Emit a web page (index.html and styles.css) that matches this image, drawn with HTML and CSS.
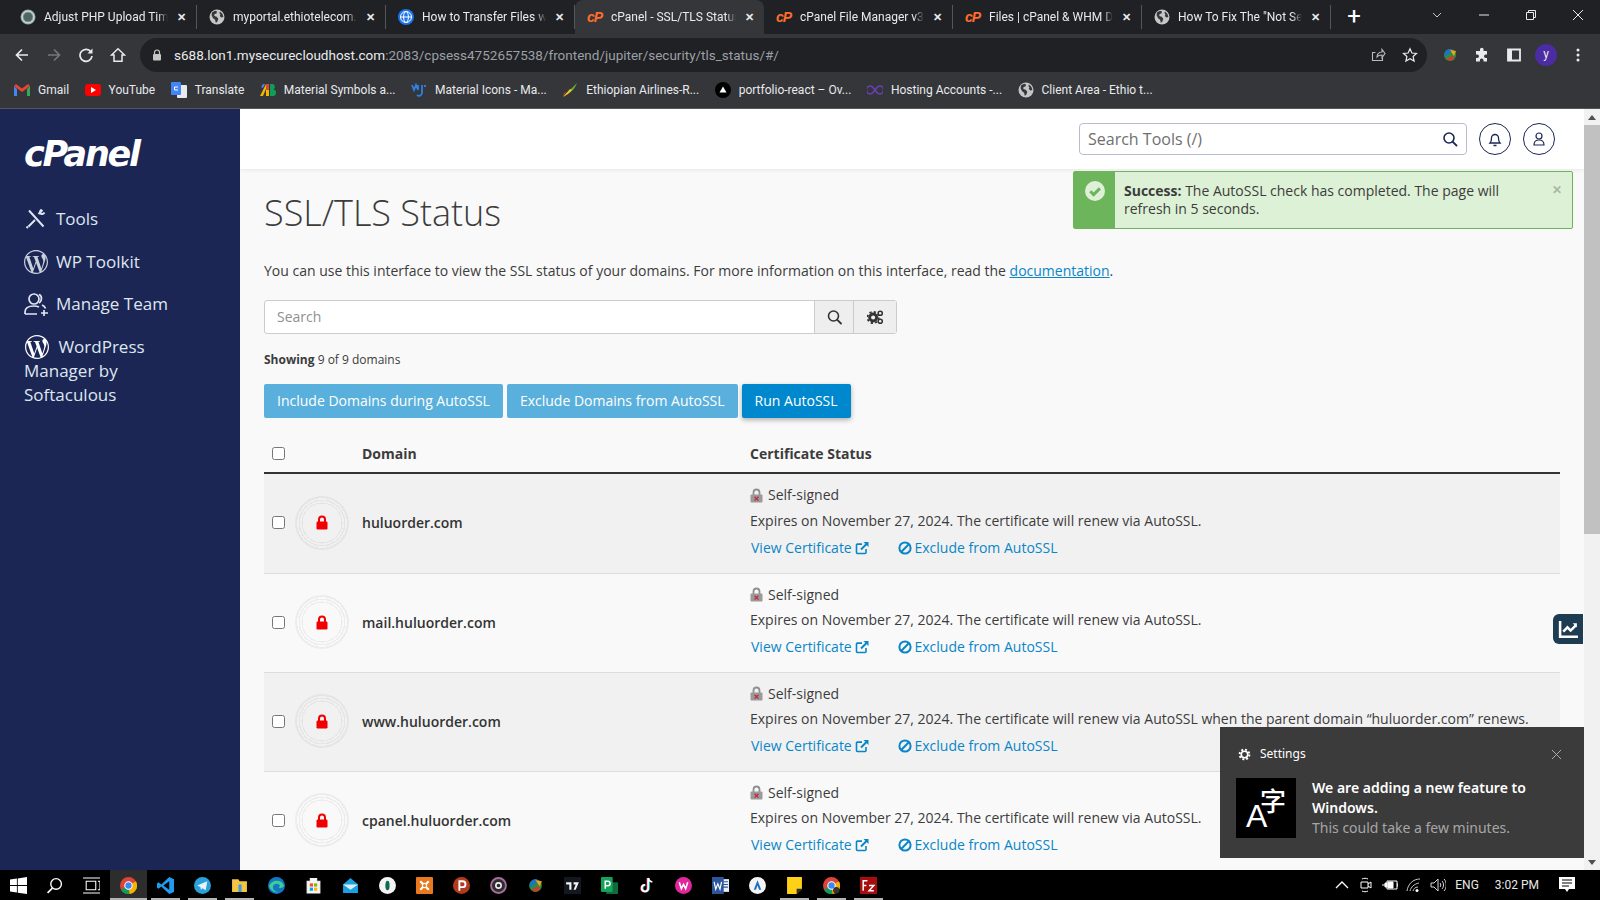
FILE: index.html
```html
<!DOCTYPE html>
<html lang="en">
<head>
  <meta charset="UTF-8">
  <title>cPanel - SSL/TLS Status</title>
  <link rel="stylesheet" href="styles.css">
</head>
<body>
  <!-- shared icons -->
  <svg class="sprite" xmlns="http://www.w3.org/2000/svg">
    <symbol id="i-globe" viewBox="0 0 16 16">
      <circle cx="8" cy="8" r="7.5" fill="#c4c7c5"/>
      <path d="M3 3.5l3-1.8 2 .8-.5 2-2 .5-.2 2 2.4.8 1.6 2-1 3-1.5 1-.7-3-2-1.5-1.5-3zM11 2.5l2.5 2.5.9 3-2 .5-1.6-1.5.6-1.5-1-1.5z" fill="#35363a"/>
    </symbol>
    <symbol id="i-wp" viewBox="0 0 24 24">
      <path fill="currentColor" d="M21.469 6.825c.84 1.537 1.318 3.3 1.318 5.175 0 3.979-2.156 7.456-5.363 9.325l3.295-9.527c.615-1.54.82-2.771.82-3.864 0-.405-.026-.78-.07-1.11m-7.981.105c.647-.03 1.232-.105 1.232-.105.582-.075.514-.93-.067-.899 0 0-1.755.135-2.88.135-1.064 0-2.85-.15-2.85-.15-.585-.03-.661.855-.075.885 0 0 .54.061 1.125.09l1.68 4.605-2.37 7.08L5.354 6.9c.649-.03 1.234-.1 1.234-.1.585-.075.516-.93-.065-.896 0 0-1.746.138-2.874.138-.2 0-.438-.008-.69-.015C4.911 3.15 8.235 1.215 12 1.215c2.809 0 5.365 1.072 7.286 2.833-.046-.003-.091-.009-.141-.009-1.06 0-1.812.923-1.812 1.914 0 .89.513 1.643 1.06 2.531.411.72.89 1.643.89 2.977 0 .915-.354 1.994-.821 3.479l-1.075 3.585-3.9-11.61.001.014zM12 22.784c-1.059 0-2.081-.153-3.048-.437l3.237-9.406 3.315 9.087c.024.053.05.101.078.149-1.12.393-2.325.609-3.582.609M1.211 12c0-1.564.336-3.05.935-4.39L7.29 21.709C3.694 19.96 1.212 16.271 1.211 12M12 0C5.385 0 0 5.385 0 12s5.385 12 12 12 12-5.385 12-12S18.615 0 12 0"/>
    </symbol>
    <symbol id="i-search" viewBox="0 0 16 16">
      <circle cx="7" cy="7" r="5" fill="none" stroke="currentColor" stroke-width="1.6"/>
      <path d="M10.8 10.8L14.5 14.5" stroke="currentColor" stroke-width="1.8" stroke-linecap="round"/>
    </symbol>
    <symbol id="i-redlock" viewBox="0 0 12 15">
      <path d="M3 7V4.5a3 3 0 0 1 6 0V7" fill="none" stroke="#f00000" stroke-width="2"/>
      <rect x="0.5" y="6.5" width="11" height="8" rx="1.2" fill="#f00000"/>
    </symbol>
    <symbol id="i-graylock" viewBox="0 0 13 15">
      <path d="M3.5 7V4.5a3 3 0 0 1 6 0V7" fill="none" stroke="#8f8f8f" stroke-width="1.8"/>
      <rect x="0.5" y="6.5" width="12" height="8" rx="1" fill="#9a9a9a"/>
      <path d="M4.5 8.8l4 3.8M8.5 8.8l-4 3.8" stroke="#c4283c" stroke-width="1.3"/>
    </symbol>
    <symbol id="i-ext" viewBox="0 0 14 14">
      <path d="M11 8v3.6a.9.9 0 0 1-.9.9H2.4a.9.9 0 0 1-.9-.9V4a.9.9 0 0 1 .9-.9H7" fill="none" stroke="currentColor" stroke-width="1.6"/>
      <path d="M6 8.5L12 2.5" stroke="currentColor" stroke-width="1.9"/>
      <path d="M8.5 1h5v5z" fill="currentColor"/>
    </symbol>
    <symbol id="i-ban" viewBox="0 0 14 14">
      <circle cx="7" cy="7" r="5.6" fill="none" stroke="currentColor" stroke-width="2"/>
      <path d="M3.2 11L11 3" stroke="currentColor" stroke-width="2"/>
    </symbol>
  </svg>

  <header class="chrome">
    <div class="tabstrip">
      <div class="tab">
        <svg class="fav" viewBox="0 0 16 16"><circle cx="8" cy="8" r="7.5" fill="#8fa5a0"/><circle cx="8" cy="8" r="4.5" fill="#4f6661"/><circle cx="8" cy="8" r="6" fill="none" stroke="#dfe5e3"/></svg>
        <span class="tab-title">Adjust PHP Upload Time</span><span class="tab-x">✕</span>
      </div>
      <div class="tab">
        <svg class="fav"><use href="#i-globe"/></svg>
        <span class="tab-title">myportal.ethiotelecom.et</span><span class="tab-x">✕</span>
      </div>
      <div class="tab">
        <svg class="fav" viewBox="0 0 16 16"><circle cx="8" cy="8" r="8" fill="#1a73e8"/><circle cx="8" cy="8" r="5.5" fill="none" stroke="#fff"/><ellipse cx="8" cy="8" rx="2.4" ry="5.5" fill="none" stroke="#fff"/><path d="M2.5 8h11" stroke="#fff"/></svg>
        <span class="tab-title">How to Transfer Files with</span><span class="tab-x">✕</span>
      </div>
      <div class="tab tab-active">
        <span class="fav cp-fav">cP</span>
        <span class="tab-title">cPanel - SSL/TLS Status</span><span class="tab-x">✕</span>
      </div>
      <div class="tab">
        <span class="fav cp-fav">cP</span>
        <span class="tab-title">cPanel File Manager v3</span><span class="tab-x">✕</span>
      </div>
      <div class="tab">
        <span class="fav cp-fav">cP</span>
        <span class="tab-title">Files | cPanel &amp; WHM Docs</span><span class="tab-x">✕</span>
      </div>
      <div class="tab">
        <svg class="fav"><use href="#i-globe"/></svg>
        <span class="tab-title">How To Fix The "Not Secure"</span><span class="tab-x">✕</span>
      </div>
      <span class="newtab">+</span>
      <div class="winctl">
        <svg viewBox="0 0 12 12"><path d="M2 4l4 4 4-4" fill="none" stroke="#c8c8c8"/></svg>
        <svg viewBox="0 0 12 12"><path d="M1 6h10" stroke="#e8e8e8"/></svg>
        <svg viewBox="0 0 12 12"><path d="M1.5 3.5h7v7h-7zM3.5 3.5v-2h7v7h-2" fill="none" stroke="#e8e8e8"/></svg>
        <svg viewBox="0 0 12 12"><path d="M1 1l10 10M11 1L1 11" stroke="#e8e8e8"/></svg>
      </div>
    </div>

    <div class="toolbar">
      <div class="nav-btns">
        <svg viewBox="0 0 16 16"><path d="M14 8H3M8 2.5L2.5 8 8 13.5" fill="none" stroke="#e8eaed" stroke-width="1.7"/></svg>
        <svg viewBox="0 0 16 16"><path d="M2 8h11M8 2.5L13.5 8 8 13.5" fill="none" stroke="#74777a" stroke-width="1.7"/></svg>
        <svg viewBox="0 0 16 16"><path d="M13 5A6 6 0 1 0 14 9" fill="none" stroke="#e8eaed" stroke-width="1.7"/><path d="M14.5 1.5v5h-5z" fill="#e8eaed"/></svg>
        <svg viewBox="0 0 16 16"><path d="M8 1.8L1.5 8H4v6.2h8V8h2.5z" fill="none" stroke="#e8eaed" stroke-width="1.5"/></svg>
      </div>
      <div class="omnibox">
        <svg class="omni-lock" viewBox="0 0 10 12"><path d="M2.5 5V3.5a2.5 2.5 0 0 1 5 0V5" fill="none" stroke="#c4c7c5" stroke-width="1.2"/><rect x="1" y="5" width="8" height="6.5" rx="1" fill="#c4c7c5"/></svg>
        <span class="url"><b>s688.lon1.mysecurecloudhost.com</b>:2083/cpsess4752657538/frontend/jupiter/security/tls_status/#/</span>
        <svg class="omni-act" viewBox="0 0 16 16"><path d="M12.5 9.5v4h-10v-8h3M7 10c0-3 2-5 5-5V2.5L15 6.5l-3 4V8c-2 0-4 .5-5 2z" fill="none" stroke="#b9bbbd" stroke-width="1.1"/></svg>
        <svg class="omni-act" viewBox="0 0 16 16"><path d="M8 1.8l1.900 4.200 4.600.5-3.400 3 1 4.600L8 11.700 3.900 14.100l1-4.600-3.400-3 4.600-.5z" fill="none" stroke="#e8eaed" stroke-width="1.2"/></svg>
      </div>
      <div class="ext-btns">
        <svg viewBox="0 0 16 16"><circle cx="8" cy="8" r="6" fill="#2c8f3f"/><path d="M3 10a6 6 0 0 1 6-8l1 3-4 2z" fill="#1e6fd0"/><path d="M8 3l6 1-2 5z" fill="#f0a21f"/><path d="M4 12l6-3 3 2-5 3z" fill="#d03a2f"/></svg>
        <svg viewBox="0 0 16 16"><path d="M6 2.500a1.800 1.800 0 0 1 3.600 0V4h3.400v3.400h-1.200a1.800 1.800 0 0 0 0 3.600H13v3.500H9.500v-1.200a1.800 1.800 0 0 0-3.600 0v1.200H2V11h1.200a1.800 1.800 0 0 0 0-3.600H2V4h4z" fill="#e8eaed"/></svg>
        <svg viewBox="0 0 16 16"><path d="M2 2.500h12v11H2z" fill="none" stroke="#e8eaed" stroke-width="1.800"/><path d="M2 2.500h4v11H2z" fill="#e8eaed"/></svg>
        <span class="avatar">y</span>
        <svg viewBox="0 0 16 16"><circle cx="8" cy="3" r="1.500" fill="#e8eaed"/><circle cx="8" cy="8" r="1.500" fill="#e8eaed"/><circle cx="8" cy="13" r="1.500" fill="#e8eaed"/></svg>
      </div>
    </div>

    <nav class="bookmarks">
      <a class="bm"><svg viewBox="0 0 16 12"><path d="M0 2v10h3V5z" fill="#4285f4"/><path d="M13 5v7h3V2z" fill="#34a853"/><path d="M0 2l8 6 8-6-2-2-6 4.500L2 0z" fill="#ea4335"/></svg>Gmail</a>
      <a class="bm"><svg viewBox="0 0 16 12"><rect width="16" height="12" rx="3" fill="#f00"/><path d="M6 3l5 3-5 3z" fill="#fff"/></svg>YouTube</a>
      <a class="bm"><svg viewBox="0 0 16 16"><rect x="6" y="3" width="10" height="13" rx="1" fill="#e8eaed"/><rect width="10" height="13" rx="1" fill="#4285f4"/><path d="M7 5H3.500v3H7" fill="none" stroke="#fff"/></svg>Translate</a>
      <a class="bm"><svg viewBox="0 0 16 16"><path d="M0 14L6 2h3v12H6V7l-3 7z" fill="#f4b400"/><path d="M6 2h3v6H6z" fill="#db4437"/><path d="M10 2h2.500a3 3 0 0 1 1 5.500A3.300 3.300 0 0 1 12.500 14H10z" fill="#0f9d58"/><path d="M1 5l2-3h2L3 6z" fill="#4285f4"/></svg>Material Symbols a...</a>
      <a class="bm"><svg viewBox="0 0 16 16"><path d="M1 3l2 5 2-5 2 5V3M11 3v8a3 3 0 0 1-5 2M14 3v2" fill="none" stroke="#2f7fe0" stroke-width="1.800"/></svg>Material Icons - Ma...</a>
      <a class="bm"><svg viewBox="0 0 16 16"><path d="M1 15L15 1c-2 5-5 9-10 11z" fill="#6fae3a"/><path d="M1 15l7-8 2 1-4 4z" fill="#f2c81e"/><path d="M1 15l3-5-2 1z" fill="#d83a2f"/></svg>Ethiopian Airlines-R...</a>
      <a class="bm"><svg viewBox="0 0 16 16"><circle cx="8" cy="8" r="8" fill="#000"/><path d="M8 4.500l3.500 6h-7z" fill="#fff"/></svg>portfolio-react – Ov...</a>
      <a class="bm"><svg viewBox="0 0 16 10"><path d="M8 5c-1.500-2-2.500-4-4.500-4a4 4 0 0 0 0 8C5.500 9 6.500 7 8 5c1.500-2 2.500-4 4.500-4a4 4 0 0 1 0 8C10.500 9 9.500 7 8 5z" fill="none" stroke="#6a3fb5" stroke-width="1.600"/></svg>Hosting Accounts -...</a>
      <a class="bm"><svg><use href="#i-globe"/></svg>Client Area - Ethio t...</a>
    </nav>
  </header>

  <div class="app">
    <aside class="sidebar">
      <div class="logo">cPanel</div>
      <ul class="side-nav">
        <li>
          <svg class="side-ico" viewBox="0 0 24 24"><path d="M5 3.500l14.500 16M18.500 3l-4 4M20.500 5.500c-1 1.500-3 2-4 1s-.5-3 1-4M11 13l-6.500 6.500M4 21l-1.500-1.500" fill="none" stroke="#dfe6f0" stroke-width="2"/></svg>
          <span>Tools</span>
        </li>
        <li>
          <svg class="side-ico"><use href="#i-wp"/></svg>
          <span>WP Toolkit</span>
        </li>
        <li>
          <svg class="side-ico" viewBox="0 0 24 24"><circle cx="10" cy="7" r="5" fill="none" stroke="#dfe6f0" stroke-width="1.700"/><path d="M1 22v-2c0-4 3.500-6 9-6 2 0 3.500.3 5 1M1 22h12M15 2.500c3 .8 3.500 6 0 8.500M18 13c2 .8 3 2 3.500 3.500M20 18v6M17 21h7" fill="none" stroke="#dfe6f0" stroke-width="1.700"/></svg>
          <span>Manage Team</span>
        </li>
        <li class="side-wrap">
          <svg class="side-ico side-ico-white"><use href="#i-wp"/></svg>
          WordPress Manager by Softaculous
        </li>
      </ul>
    </aside>

    <div class="main">
      <div class="topbar">
        <div class="tool-search">
          <span>Search Tools (/)</span>
          <svg class="tool-search-ico"><use href="#i-search"/></svg>
        </div>
        <span class="round-btn">
          <svg viewBox="0 0 16 16"><path d="M3 12c1-1 1.500-2 1.500-5a3.500 3.500 0 0 1 7 0c0 3 .5 4 1.500 5zM6.500 14.500h3" fill="none" stroke="#1b2655" stroke-width="1.300"/></svg>
        </span>
        <span class="round-btn">
          <svg viewBox="0 0 16 16"><circle cx="8" cy="5" r="3" fill="none" stroke="#1b2655" stroke-width="1.200"/><path d="M3 14c0-3 2-5 5-5s5 2 5 5z" fill="none" stroke="#1b2655" stroke-width="1.200"/></svg>
        </span>
      </div>

      <div class="content">
        <h1>SSL/TLS Status</h1>
        <p class="intro">You can use this interface to view the SSL status of your domains. For more information on this interface, read the <a href="#">documentation</a>.</p>

        <div class="search-group">
          <div class="search-input">Search</div>
          <span class="addon"><svg><use href="#i-search"/></svg></span>
          <span class="addon addon-wide">
            <svg viewBox="0 0 18 16"><circle cx="6.500" cy="8.500" r="3.700" fill="none" stroke="#333" stroke-width="3"/><circle cx="6.500" cy="8.500" r="6" fill="none" stroke="#333" stroke-width="1.800" stroke-dasharray="2.400 2.300"/><circle cx="14" cy="4" r="2.200" fill="none" stroke="#333" stroke-width="1.600"/><circle cx="14" cy="12.500" r="2.200" fill="none" stroke="#333" stroke-width="1.600"/></svg>
          </span>
        </div>

        <p class="showing"><strong>Showing</strong> 9 of 9 domains</p>

        <div class="actions">
          <button class="btn btn-light">Include Domains during AutoSSL</button>
          <button class="btn btn-light">Exclude Domains from AutoSSL</button>
          <button class="btn btn-primary">Run AutoSSL</button>
        </div>

        <div class="table-head row-grid">
          <div class="cell-check"><input type="checkbox"></div>
          <div>Domain</div>
          <div>Certificate Status</div>
        </div>

        <div class="dom-list">
          <div class="dom-row row-grid">
            <div class="cell-check"><input type="checkbox"><span class="ring"><svg><use href="#i-redlock"/></svg></span></div>
            <div class="dom-name">huluorder.com</div>
            <div class="status">
              <div class="status-line status-first"><svg class="gray-lock"><use href="#i-graylock"/></svg>Self-signed</div>
              <div class="status-line">Expires on November 27, 2024. The certificate will renew via AutoSSL.</div>
              <div class="status-links">
                <a href="#">View Certificate <svg><use href="#i-ext"/></svg></a>
                <a href="#"><svg class="ban"><use href="#i-ban"/></svg> Exclude from AutoSSL</a>
              </div>
            </div>
          </div>

          <div class="dom-row row-grid">
            <div class="cell-check"><input type="checkbox"><span class="ring"><svg><use href="#i-redlock"/></svg></span></div>
            <div class="dom-name">mail.huluorder.com</div>
            <div class="status">
              <div class="status-line status-first"><svg class="gray-lock"><use href="#i-graylock"/></svg>Self-signed</div>
              <div class="status-line">Expires on November 27, 2024. The certificate will renew via AutoSSL.</div>
              <div class="status-links">
                <a href="#">View Certificate <svg><use href="#i-ext"/></svg></a>
                <a href="#"><svg class="ban"><use href="#i-ban"/></svg> Exclude from AutoSSL</a>
              </div>
            </div>
          </div>

          <div class="dom-row row-grid">
            <div class="cell-check"><input type="checkbox"><span class="ring"><svg><use href="#i-redlock"/></svg></span></div>
            <div class="dom-name">www.huluorder.com</div>
            <div class="status">
              <div class="status-line status-first"><svg class="gray-lock"><use href="#i-graylock"/></svg>Self-signed</div>
              <div class="status-line">Expires on November 27, 2024. The certificate will renew via AutoSSL when the parent domain “huluorder.com” renews.</div>
              <div class="status-links">
                <a href="#">View Certificate <svg><use href="#i-ext"/></svg></a>
                <a href="#"><svg class="ban"><use href="#i-ban"/></svg> Exclude from AutoSSL</a>
              </div>
            </div>
          </div>

          <div class="dom-row row-grid">
            <div class="cell-check"><input type="checkbox"><span class="ring"><svg><use href="#i-redlock"/></svg></span></div>
            <div class="dom-name">cpanel.huluorder.com</div>
            <div class="status">
              <div class="status-line status-first"><svg class="gray-lock"><use href="#i-graylock"/></svg>Self-signed</div>
              <div class="status-line">Expires on November 27, 2024. The certificate will renew via AutoSSL.</div>
              <div class="status-links">
                <a href="#">View Certificate <svg><use href="#i-ext"/></svg></a>
                <a href="#"><svg class="ban"><use href="#i-ban"/></svg> Exclude from AutoSSL</a>
              </div>
            </div>
          </div>
        </div>
      </div>

      <div class="alert">
        <div class="alert-side">
          <svg viewBox="0 0 16 16"><circle cx="8" cy="8" r="8" fill="#dff0d8"/><path d="M4.200 8.200l2.700 2.700 5-5" fill="none" stroke="#6cb55a" stroke-width="2.400"/></svg>
        </div>
        <div class="alert-text"><strong>Success:</strong> The AutoSSL check has completed. The page will refresh in 5 seconds.</div>
        <span class="alert-x">✕</span>
      </div>

      <span class="chart-btn">
        <svg viewBox="0 0 20 20"><path d="M2 2v15h17" fill="none" stroke="#fff" stroke-width="2.400"/><path d="M5 12l4-4 3 3 5-5" fill="none" stroke="#fff" stroke-width="2.400"/><path d="M14 4h4v4z" fill="#fff"/></svg>
      </span>
    </div>

    <div class="scrollbar">
      <span class="arrow-up"></span>
      <div class="thumb"></div>
      <span class="arrow-down"></span>
    </div>
  </div>

  <footer class="taskbar">
    <span class="task task-start"><svg viewBox="0 0 16 16"><path d="M0 2.300L6.500 1.400v6.200H0zM7.300 1.300L16 0v7.600H7.300zM0 8.400h6.500v6.200L0 13.700zM7.300 8.400H16V16l-8.700-1.200z" fill="#fff"/></svg></span>
    <span class="task"><svg viewBox="0 0 16 16"><circle cx="9.500" cy="6.500" r="5" fill="none" stroke="#fff" stroke-width="1.300"/><path d="M6 10.500L1.500 15" stroke="#fff" stroke-width="1.500"/></svg></span>
    <span class="task"><svg viewBox="0 0 16 16"><path d="M0 1h16M0 15h16M3 4h9v8H3z" fill="none" stroke="#fff"/><path d="M14 4h2v8h-2" fill="none" stroke="#fff"/></svg></span>
    <span class="task task-on"><svg viewBox="0 0 16 16"><circle cx="8" cy="8" r="8" fill="#db4437"/><path d="M8 8L1 12a8 8 0 0 0 8 4z" fill="#0f9d58"/><path d="M8 8l7-4a8 8 0 0 1-6 12z" fill="#f4b400"/><circle cx="8" cy="8" r="3.500" fill="#4285f4" stroke="#fff"/></svg></span>
    <span class="task run"><svg viewBox="0 0 16 16"><path d="M11.500 0L16 2v12l-4.500 2L4 9l-2.500 2L0 10V6l1.500-1L4 7z" fill="#1f9cf0"/><path d="M11.500 4v8L6 8z" fill="#000"/></svg></span>
    <span class="task run"><svg viewBox="0 0 16 16"><circle cx="8" cy="8" r="8" fill="#2aa1da"/><path d="M3 8l9.500-4-1.500 8.500-3-2-1.500 1.500-.5-2.500z" fill="#e8f4fb"/></svg></span>
    <span class="task run"><svg viewBox="0 0 16 16"><path d="M1 2h6l1 2h7v10H1z" fill="#f4c542"/><path d="M7 7h3v7H7z" fill="#3f9be0"/></svg></span>
    <span class="task"><svg viewBox="0 0 16 16"><circle cx="8" cy="8" r="8" fill="#1276c9"/><path d="M1 9c2-7 12-7 14-1 0 2-3 3-5 2 3-2-1-5-4-3-3 2-1 8 5 7a8 8 0 0 1-10-5z" fill="#3ecf8e"/></svg></span>
    <span class="task"><svg viewBox="0 0 16 16"><path d="M2 4h12v11H2zM5 4V1.500h6V4" fill="#f4f4f4" stroke="#f4f4f4"/><rect x="4.500" y="6" width="3" height="3" fill="#f25022"/><rect x="8.500" y="6" width="3" height="3" fill="#7fba00"/><rect x="4.500" y="10" width="3" height="3" fill="#00a4ef"/><rect x="8.500" y="10" width="3" height="3" fill="#ffb900"/></svg></span>
    <span class="task"><svg viewBox="0 0 16 16"><path d="M1 7l7-6 7 6v8H1z" fill="#1ba1e2"/><path d="M1 7l7 5 7-5" fill="#d8f1fc"/></svg></span>
    <span class="task"><svg viewBox="0 0 16 16"><circle cx="8" cy="8" r="8" fill="#f4f4f4"/><ellipse cx="8" cy="8" rx="2" ry="4.500" fill="#0b6b50"/></svg></span>
    <span class="task"><svg viewBox="0 0 16 16"><rect width="16" height="16" rx="1" fill="#e8791f"/><path d="M4 4l8 8M12 4l-8 8" stroke="#fff" stroke-width="2"/><circle cx="8" cy="8" r="2" fill="#e8791f" stroke="#fff"/></svg></span>
    <span class="task"><svg viewBox="0 0 16 16"><circle cx="8" cy="8" r="8" fill="#b23a1e"/><path d="M6 13V4h3a2.500 2.500 0 0 1 0 5.500H6" fill="none" stroke="#fff" stroke-width="1.800"/></svg></span>
    <span class="task"><svg viewBox="0 0 16 16"><circle cx="8" cy="8" r="7" fill="#2d2d2d" stroke="#a66ca0" stroke-width="1.800"/><circle cx="8" cy="8" r="2.500" fill="none" stroke="#f0f0f0" stroke-width="1.500"/></svg></span>
    <span class="task"><svg viewBox="0 0 16 16"><circle cx="8" cy="8" r="6" fill="#2c8f3f"/><path d="M3 10a6 6 0 0 1 6-8l1 3-4 2z" fill="#1e6fd0"/><path d="M8 3l6 1-2 5z" fill="#f0a21f"/><path d="M4 12l6-3 3 2-5 3z" fill="#d03a2f"/></svg></span>
    <span class="task"><svg viewBox="0 0 16 16"><rect width="16" height="16" fill="#131722"/><path d="M2 5h5v7H5V7H2zM9 5h5l-3 7H9l2-5H9z" fill="#f4f4f4"/></svg></span>
    <span class="task"><svg viewBox="0 0 16 16"><rect x="5" y="5" width="11" height="11" fill="#0e6b3b"/><rect width="11" height="14" rx="1" fill="#15a35a"/><path d="M4 11V4h2.500a2 2 0 0 1 0 4.200H4" fill="none" stroke="#fff" stroke-width="1.400"/></svg></span>
    <span class="task"><svg viewBox="0 0 16 16"><path d="M10 1v9.500a3 3 0 1 1-3-3" fill="none" stroke="#25f4ee" stroke-width="2"/><path d="M9 1v9.500a3 3 0 1 1-3-3" fill="none" stroke="#fe2c55" stroke-width="2"/><path d="M9.500 1v9.500a3 3 0 1 1-3-3M9.500 1c.5 2 2 3.500 4 3.500" fill="none" stroke="#fff" stroke-width="1.600"/></svg></span>
    <span class="task"><svg viewBox="0 0 16 16"><circle cx="8" cy="8" r="8" fill="#e0289c"/><path d="M4 5l2 6 2-4 2 4 2-6" fill="none" stroke="#fff" stroke-width="1.500"/></svg></span>
    <span class="task"><svg viewBox="0 0 16 16"><rect x="5" y="2" width="11" height="12" fill="#e8eef8"/><path d="M10 4.500h5M10 7h5M10 9.500h5" stroke="#2b579a"/><rect width="11" height="16" fill="#2b579a"/><path d="M2 4.500l1.500 7 2-5 2 5 1.500-7" fill="none" stroke="#fff" stroke-width="1.100"/></svg></span>
    <span class="task"><svg viewBox="0 0 16 16"><circle cx="8" cy="8" r="8" fill="#f4f4f4"/><path d="M8 3l3.500 9h-2L8 8l-1.500 4h-2z" fill="#1a6fc9"/></svg></span>
    <span class="task run"><svg viewBox="0 0 16 16"><path d="M1 0h14v11l-5 5H1z" fill="#fcd116"/><path d="M15 11h-5v5z" fill="#2c2c2c"/></svg></span>
    <span class="task run"><svg viewBox="0 0 16 16"><circle cx="8" cy="8" r="8" fill="#db4437"/><path d="M8 8L1 12a8 8 0 0 0 8 4z" fill="#0f9d58"/><path d="M8 8l7-4a8 8 0 0 1-6 12z" fill="#f4b400"/><circle cx="8" cy="8" r="3.500" fill="#4285f4" stroke="#fff"/><circle cx="12.500" cy="12.500" r="3" fill="#333"/></svg></span>
    <span class="task run"><svg viewBox="0 0 16 16"><rect width="16" height="16" fill="#a80c0c"/><path d="M3 13V3.500h4M3 8h3M8.500 8H13l-4.500 5H13" fill="none" stroke="#fff" stroke-width="1.400"/></svg></span>

    <div class="tray">
      <svg class="tray-ico" viewBox="0 0 16 16"><path d="M2 11l6-6 6 6" fill="none" stroke="#fff" stroke-width="1.300"/></svg>
      <svg class="tray-ico" viewBox="0 0 16 16"><path d="M4 2c2-1 4-1 6 0M4 14c2 1 4 1 6 0M3 5h7v6H3zM10 7l3-2v6l-3-2" fill="none" stroke="#fff"/></svg>
      <svg class="tray-ico" viewBox="0 0 16 16"><path d="M5 4h10v8H5zM15 7h1v2h-1" fill="none" stroke="#fff"/><path d="M6 5h5v6H6zM0 8h3M3 6v4M3 6h2v4H3" fill="#fff" stroke="#fff"/></svg>
      <svg class="tray-ico" viewBox="0 0 16 16"><path d="M1 14C2 7 7 2 14 2M4 14c1-4 4-7 9-8M7 14c.5-2 2-4 5-4" fill="none" stroke="#c8c8c8"/><circle cx="11" cy="13.500" r="1.500" fill="#fff"/></svg>
      <svg class="tray-ico" viewBox="0 0 16 16"><path d="M1 6h3l4-4v12l-4-4H1zM10 6c1 1 1 3 0 4M12 4c2 2 2 6 0 8M14 2c3 3 3 9 0 12" fill="none" stroke="#d8d8d8"/></svg>
      <span class="tray-lang">ENG</span>
      <span class="tray-time">3:02 PM</span>
      <svg class="tray-note" viewBox="0 0 16 16"><path d="M0 0h16v12H10l-2 3-2-3H0z" fill="#fff"/><path d="M3 3h10M3 6h10M3 9h7" stroke="#000"/></svg>
    </div>
  </footer>

  <div class="toast">
    <div class="toast-head">
      <svg viewBox="0 0 16 16"><circle cx="8" cy="8" r="4" fill="none" stroke="#fff" stroke-width="2"/><circle cx="8" cy="8" r="6" fill="none" stroke="#fff" stroke-width="2.400" stroke-dasharray="2.400 2.300"/></svg>
      <span>Settings</span>
      <svg class="toast-x" viewBox="0 0 12 12"><path d="M1 1l10 10M11 1L1 11" stroke="#b5b5b5"/></svg>
    </div>
    <div class="toast-body">
      <div class="toast-pic"><span class="pic-a">A</span><span class="pic-zi">字</span></div>
      <div class="toast-text">
        <strong>We are adding a new feature to Windows.</strong>
        <span>This could take a few minutes.</span>
      </div>
    </div>
  </div>
</body>
</html>
```

FILE: styles.css
```css
* {
  box-sizing: border-box;
}

html, body {
  margin: 0;
  height: 900px;
  overflow: hidden;
}

body {
  display: flex;
  flex-direction: column;
  font-family: "Open Sans", sans-serif;
  font-size: 14px;
  color: #3c3c3c;
  background: #f9f9f9;
}

.sprite {
  display: none;
}

a {
  color: #0a86c7;
  text-decoration: none;
}

/* browser chrome */
.chrome {
  height: 109px;
  flex: none;
  background: #35363a;
  font-family: Roboto, sans-serif;
  color: #e8eaed;
  border-bottom: 1px solid #55565a;
}

.tabstrip {
  height: 34px;
  background: #202124;
  display: flex;
  align-items: stretch;
  padding-left: 8px;
}

.tab {
  width: 189px;
  display: flex;
  align-items: center;
  padding: 0 7px 0 12px;
  font-size: 12px;
  position: relative;
  border-right: 1px solid #55565a;
  margin: 5px 0 5px;
}

.tab-active {
  background: #35363a;
  border-radius: 8px 8px 0 0;
  margin: 0;
  border-right: 0;
}

.fav {
  width: 16px;
  height: 16px;
  flex: none;
  margin-right: 8px;
}

.cp-fav {
  font: italic 700 14px/16px "Liberation Sans", sans-serif;
  color: #ff6c2c;
  letter-spacing: -1px;
}

.tab-title {
  flex: 1;
  white-space: nowrap;
  overflow: hidden;
  -webkit-mask-image: linear-gradient(90deg, #000 calc(100% - 10px), transparent);
  mask-image: linear-gradient(90deg, #000 calc(100% - 10px), transparent);
}

.tab-x {
  width: 16px;
  text-align: center;
  font-size: 11px;
  font-weight: 700;
  margin-left: 5px;
}

.newtab {
  width: 46px;
  text-align: center;
  font-size: 24px;
  line-height: 32px;
  color: #fff;
}

.winctl {
  margin-left: auto;
  display: flex;
  align-items: center;
  gap: 35px;
  padding: 0 16px 4px 0;
}

.winctl svg {
  width: 12px;
  height: 12px;
}

.toolbar {
  height: 41px;
  display: flex;
  align-items: center;
}

.nav-btns {
  display: flex;
  gap: 16px;
  padding-left: 14px;
  width: 140px;
}

.nav-btns svg {
  width: 16px;
  height: 16px;
}

.omnibox {
  width: 1287px;
  height: 34px;
  border-radius: 17px;
  background: #202124;
  display: flex;
  align-items: center;
  padding: 0 9px 0 12px;
}

.omni-lock {
  width: 10px;
  height: 12px;
  margin-right: 12px;
}

.url {
  flex: 1;
  font-size: 13.5px;
  color: #9aa0a6;
  white-space: nowrap;
}

.url b {
  font-weight: 400;
  color: #e8eaed;
}

.omni-act {
  width: 16px;
  height: 16px;
  margin-left: 16px;
}

.ext-btns {
  display: flex;
  align-items: center;
  gap: 16px;
  padding-left: 15px;
}

.ext-btns svg {
  width: 16px;
  height: 16px;
}

.avatar {
  width: 22px;
  height: 22px;
  margin: 0 -3px;
  border-radius: 50%;
  background: #4b2ca3;
  color: #e8eaed;
  font-size: 12px;
  line-height: 20px;
  text-align: center;
}

.bookmarks {
  height: 33px;
  display: flex;
  align-items: center;
  padding: 0 0 3px 14px;
  gap: 15.500px;
  font-size: 12px;
}

.bm {
  display: flex;
  align-items: center;
  gap: 8px;
  color: #e8eaed;
  white-space: nowrap;
}

.bm svg {
  width: 16px;
  height: 16px;
  flex: none;
}

/* cPanel layout */
.app {
  flex: 1;
  min-height: 0;
  display: flex;
}

.sidebar {
  width: 240px;
  flex: none;
  background: #1b2655;
  color: #dfe6f0;
  padding: 0 24px;
}

.logo {
  font: italic 700 35px/40px "DejaVu Sans", sans-serif;
  letter-spacing: -2.300px;
  color: #fff;
  padding-top: 25px;
  height: 98px;
}

.side-nav {
  list-style: none;
  margin: 0;
  padding: 0;
  font-size: 17px;
  line-height: 24px;
}

.side-nav li {
  display: flex;
  align-items: center;
  gap: 8px;
  margin-bottom: 18.700px;
}

.side-nav .side-wrap {
  display: block;
  width: 150px;
}

.side-ico {
  width: 24px;
  height: 24px;
  flex: none;
  color: #c8cfdc;
}

.side-wrap .side-ico {
  margin: 0 5px 0 1px;
  vertical-align: -6px;
}

.side-ico-white {
  color: #fff;
}

.main {
  flex: 1;
  min-width: 0;
  position: relative;
  overflow: hidden;
}

.topbar {
  height: 60px;
  background: #fff;
  box-shadow: 0 1px 4px rgba(0, 0, 0, .08);
  display: flex;
  align-items: center;
  justify-content: flex-end;
  padding-right: 29px;
  gap: 12px;
}

.tool-search {
  width: 388px;
  height: 32px;
  border: 1px solid #b9bcd0;
  border-radius: 4px;
  display: flex;
  align-items: center;
  justify-content: space-between;
  padding: 0 8px;
  font-size: 16px;
  color: #6f6f6f;
}

.tool-search-ico {
  width: 16px;
  height: 16px;
  color: #1b2655;
}

.round-btn {
  width: 32px;
  height: 32px;
  border: 1px solid #1b2655;
  border-radius: 50%;
  display: flex;
  align-items: center;
  justify-content: center;
}

.round-btn svg {
  width: 16px;
  height: 16px;
}

.content {
  padding: 0 24px;
}

h1 {
  margin: 0;
  padding-top: 19px;
  font-size: 36px;
  font-weight: 300;
  line-height: 50px;
  color: #3c3c3c;
}

.intro {
  margin: 23px 0 0;
  line-height: 20px;
}

.intro a {
  text-decoration: underline;
}

.search-group {
  margin-top: 19px;
  width: 633px;
  height: 34px;
  display: flex;
  border: 1px solid #ccc;
  border-radius: 3px;
  background: #fff;
}

.search-input {
  flex: 1;
  padding-left: 12px;
  line-height: 32px;
  color: #8f8f8f;
}

.addon {
  width: 39px;
  background: #eee;
  border-left: 1px solid #ccc;
  display: flex;
  align-items: center;
  justify-content: center;
  color: #333;
}

.addon-wide {
  width: 43px;
}

.addon svg {
  width: 17px;
  height: 16px;
}

.showing {
  margin: 17px 0 0;
  font-size: 12px;
  line-height: 18px;
}

.actions {
  margin-top: 15px;
  display: flex;
  gap: 4px;
}

.btn {
  height: 34px;
  padding: 0 12px 1px;
  border: 1px solid transparent;
  border-radius: 2px;
  font-family: inherit;
  font-size: 14px;
  color: #fff;
}

.btn-light {
  background: #5ab0dc;
}

.btn-primary {
  background: #0088cf;
  box-shadow: 0 2px 5px rgba(0, 0, 0, .3);
}

.row-grid {
  display: grid;
  grid-template-columns: 98px 388px 1fr;
  width: 1296px;
}

.table-head {
  margin-top: 16px;
  height: 40px;
  align-items: center;
  font-weight: 700;
  border-bottom: 2px solid #333;
}

.cell-check {
  display: flex;
  align-items: center;
  padding-left: 8px;
}

.cell-check input {
  width: 13px;
  height: 13px;
  margin: 0;
  flex: none;
}

.dom-row {
  height: 99px;
  padding-bottom: 2px;
  align-items: center;
  border-bottom: 1px solid #ddd;
}

.dom-row:first-child {
  height: 100px;
}

.dom-row:nth-child(odd) {
  background: #f1f1f1;
}

.ring {
  width: 54px;
  height: 54px;
  margin-left: 10px;
  border-radius: 50%;
  flex: none;
  display: flex;
  align-items: center;
  justify-content: center;
  background: radial-gradient(circle closest-side, transparent 72%, rgba(0, 0, 0, .05) 72% 76%, transparent 76% 82%, rgba(0, 0, 0, .05) 82% 87%, transparent 87% 92%, rgba(0, 0, 0, .05) 92% 100%);
}

.ring svg {
  width: 12px;
  height: 15px;
}

.dom-name {
  font-size: 14px;
  font-weight: 600;
  color: #333;
}

.status {
  line-height: 24px;
  padding-bottom: 2px;
}

.status-line {
  display: flex;
  align-items: center;
}

.status-first {
  height: 25px;
  padding-bottom: 2px;
}

.gray-lock {
  width: 13px;
  height: 15px;
  margin-right: 5px;
  flex: none;
}

.status-links {
  display: flex;
  gap: 29px;
  padding-top: 3px;
  padding-left: 1px;
}

.status-links svg {
  width: 14px;
  height: 14px;
  vertical-align: -2px;
}

.status-links .ban {
  margin-right: -1.500px;
}

/* overlays */
.alert {
  position: absolute;
  top: 62px;
  right: 11px;
  width: 500px;
  height: 58px;
  display: flex;
  background: #dcf1d5;
  border: 1px solid #6cb55a;
  border-radius: 2px;
}

.alert-side {
  width: 41px;
  background: #6cb55a;
  display: flex;
  justify-content: center;
  padding-top: 9px;
}

.alert-side svg {
  width: 20px;
  height: 20px;
}

.alert-text {
  flex: 1;
  padding: 10px 40px 0 9px;
  line-height: 18px;
}

.alert-x {
  position: absolute;
  right: 10px;
  top: 9px;
  color: #a9b8a4;
  font-size: 12px;
  font-weight: 700;
}

.chart-btn {
  position: absolute;
  top: 505px;
  right: 1px;
  width: 30px;
  height: 30px;
  background: #1f3d52;
  border-radius: 6px 0 0 6px;
  display: flex;
  align-items: center;
  justify-content: center;
}

.chart-btn svg {
  width: 21px;
  height: 21px;
}

.scrollbar {
  width: 16px;
  flex: none;
  background: #f1f1f1;
  display: flex;
  flex-direction: column;
  align-items: center;
}

.arrow-up {
  margin: 6px 0 5px;
  border: 4px solid transparent;
  border-top: 0;
  border-bottom: 5px solid #505050;
}

.thumb {
  width: 100%;
  height: 409px;
  background: #c1c1c1;
}

.arrow-down {
  margin-top: auto;
  margin-bottom: 5px;
  border: 4px solid transparent;
  border-bottom: 0;
  border-top: 5px solid #505050;
}

/* windows taskbar */
.taskbar {
  height: 30px;
  flex: none;
  background: #000;
  display: flex;
  color: #fff;
  font-family: Roboto, sans-serif;
}

.task {
  width: 37px;
  position: relative;
  display: flex;
  align-items: center;
  justify-content: center;
}

.task-start {
  width: 36px;
}

.task svg {
  width: 17px;
  height: 17px;
}

.task-on {
  background: #2d2d2d;
}

.task-on::after, .run::after {
  content: "";
  position: absolute;
  left: 4px;
  right: 4px;
  bottom: 0;
  height: 2px;
  background: #b5b5b5;
}

.task-on::after {
  left: 0;
  right: 0;
}

.tray {
  margin-left: auto;
  display: flex;
  align-items: center;
  font-size: 12px;
  color: #e8e8e8;
}

.tray-ico {
  width: 16px;
  height: 16px;
  margin-right: 8px;
}

.tray-lang {
  margin: 0 16px 0 1.500px;
}

.tray-time {
  margin-right: 20px;
}

.tray-note {
  width: 16px;
  height: 16px;
  margin-right: 25px;
}

.toast {
  position: absolute;
  top: 727px;
  left: 1220px;
  width: 364px;
  height: 131px;
  background: #3b3b3b;
  color: #fff;
  font-family: "Noto Sans", sans-serif;
  padding: 19px 16px 0;
}

.toast-head {
  display: flex;
  align-items: center;
  gap: 9px;
  font-size: 12px;
  line-height: 16px;
  padding-left: 2px;
}

.toast-head svg {
  width: 13px;
  height: 13px;
}

.toast-head .toast-x {
  margin-left: auto;
  margin-right: 6px;
  width: 11px;
  height: 11px;
}

.toast-body {
  display: flex;
  gap: 16px;
  margin-top: 16px;
}

.toast-pic {
  width: 60px;
  height: 60px;
  background: #000;
  position: relative;
  flex: none;
}

.pic-a {
  position: absolute;
  left: 10px;
  top: 22px;
  font: 32px/32px "Liberation Sans", sans-serif;
}

.pic-zi {
  position: absolute;
  left: 24px;
  top: 6px;
  font: 500 26px/32px "Noto Sans CJK SC", sans-serif;
}

.toast-text {
  display: flex;
  flex-direction: column;
  font-size: 14px;
  line-height: 20px;
}

.toast-text strong {
  font-weight: 600;
}

.toast-text span {
  color: #a6a6a6;
}
```
